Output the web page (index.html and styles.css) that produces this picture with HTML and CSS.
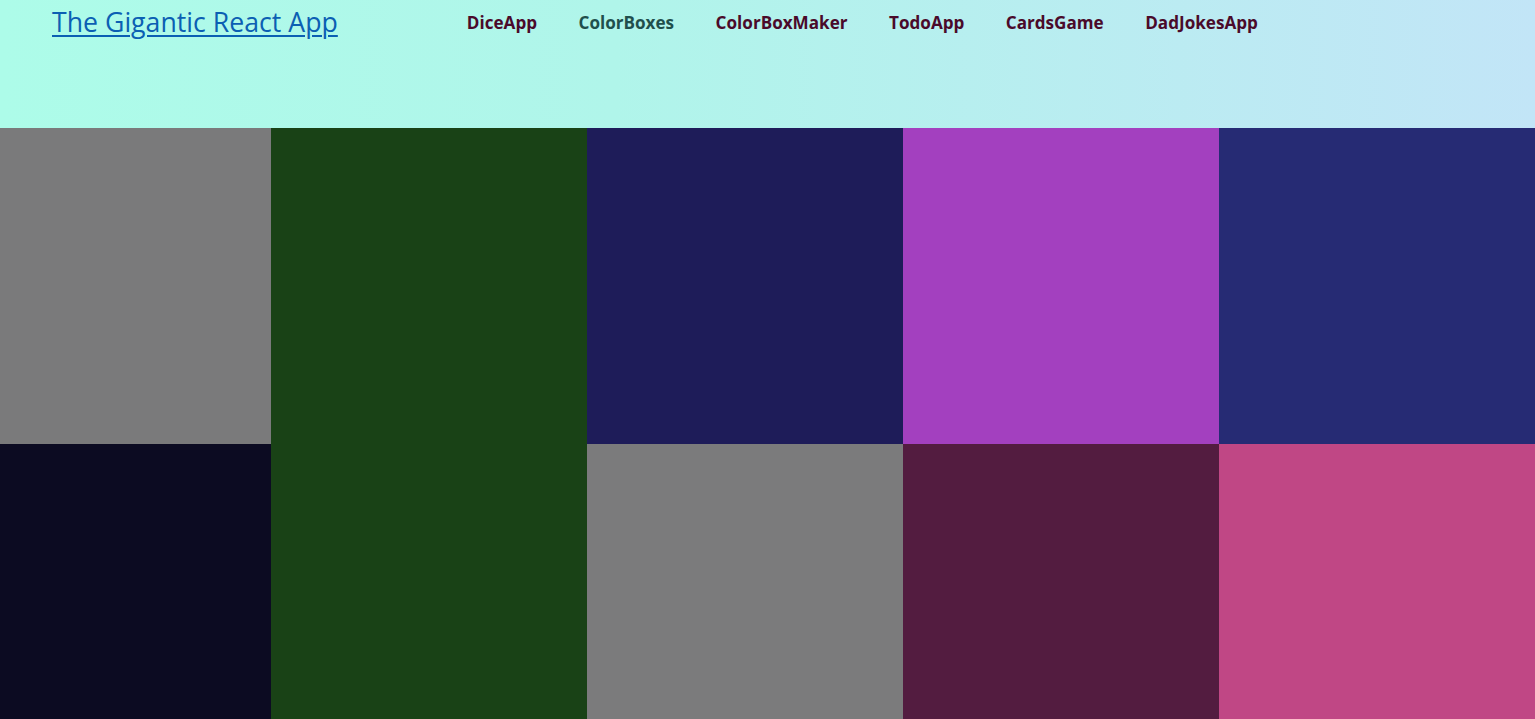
FILE: index.html
```html
<!DOCTYPE html>
<html>
<head>
<meta charset="utf-8">
<link rel="stylesheet" href="styles.css">
</head>
<body>
<header class="header">
  <a class="brand" href="#">The Gigantic React App</a>
  <nav class="nav">
    <a class="nav-link" href="#">DiceApp</a>
    <a class="nav-link active" href="#">ColorBoxes</a>
    <a class="nav-link" href="#">ColorBoxMaker</a>
    <a class="nav-link" href="#">TodoApp</a>
    <a class="nav-link" href="#">CardsGame</a>
    <a class="nav-link" href="#">DadJokesApp</a>
  </nav>
</header>
<main class="boxes">
  <div class="box c1"></div>
  <div class="box c2 tall"></div>
  <div class="box c3"></div>
  <div class="box c4"></div>
  <div class="box c5"></div>
  <div class="box c6"></div>
  <div class="box c7"></div>
  <div class="box c8"></div>
  <div class="box c9"></div>
</main>
</body>
</html>
```

FILE: styles.css
```css
html, body {
  margin: 0;
  padding: 0;
  overflow: hidden;
}
body {
  font-family: "Open Sans", "Noto Sans", sans-serif;
}
.header {
  height: 128px;
  background: linear-gradient(90deg, #adfce9 0%, #b0f5ea 40%, #c2e5f7 100%);
  display: flex;
  align-items: flex-start;
}
.brand {
  margin-left: 52px;
  margin-top: 4px;
  font-size: 26.7px;
  line-height: 36px;
  color: #0b5fb3;
  text-decoration: underline;
  text-decoration-thickness: 2px;
  text-underline-offset: 3px;
}
.nav {
  display: flex;
  margin-left: 129px;
  margin-top: 11px;
  gap: 41.5px;
}
.nav-link {
  font-size: 17.1px;
  line-height: 24px;
  font-weight: 700;
  color: #4a0a2a;
  text-decoration: none;
}
.nav-link.active {
  color: #1f4f4c;
}
.boxes {
  display: grid;
  grid-template-columns: 271px repeat(4, 316px);
  grid-template-rows: 316px 316px;
}
.tall {
  grid-row: span 2;
}
.c1 { background: #7a7a7b; }
.c2 { background: #194216; }
.c3 { background: #1e1c59; }
.c4 { background: #a340bf; }
.c5 { background: #262b74; }
.c6 { background: #0c0b22; }
.c7 { background: #7b7b7c; }
.c8 { background: #531c40; }
.c9 { background: #c04785; }
```
